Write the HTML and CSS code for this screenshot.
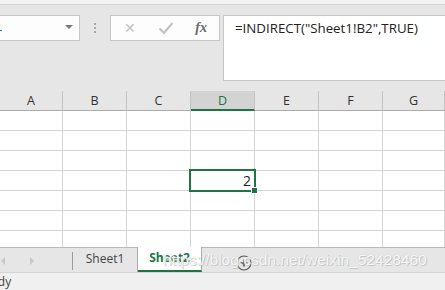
FILE: index.html
```html
<!DOCTYPE html>
<html lang="en">

<head>
    <meta charset="UTF-8">
    <title>INDIRECT - Sheet2</title>
    <link rel="stylesheet" href="styles.css">
</head>

<body>
    <div class="topstrip"></div>

    <div class="formula-row">
        <div class="namebox">
            <span class="caret-mark"></span>
            <span class="drop"></span>
        </div>
        <div class="grip"><i></i><i></i><i></i></div>
        <div class="fxbox">
            <span class="ico cancel">&#x2715;</span>
            <span class="ico enter">
                <svg width="16" height="14" viewBox="0 0 16 14"><path d="M1.5 7.5 L6 12 L14.5 2" fill="none" stroke="#c2c2c2" stroke-width="2.2"/></svg>
            </span>
            <span class="ico fx">fx</span>
        </div>
        <div class="formula">=INDIRECT("Sheet1!B2",TRUE)</div>
    </div>

    <div class="sheet">
        <div class="grid">
            <div class="hd">A</div>
            <div class="hd">B</div>
            <div class="hd">C</div>
            <div class="hd active">D</div>
            <div class="hd">E</div>
            <div class="hd">F</div>
            <div class="hd">G</div>
        </div>
        <div class="grid rows" id="rows"></div>
    </div>

    <div class="tabbar">
        <div class="nav">
            <span class="arrow left"></span>
            <span class="arrow right"></span>
        </div>
        <div class="tab">Sheet1</div>
        <div class="tab current">Sheet2</div>
        <div class="add">
            <svg width="16" height="16" viewBox="0 0 16 16"><circle cx="8" cy="8" r="7" fill="none" stroke="#555" stroke-width="1.2"/><path d="M8 4.5 V11.5 M4.5 8 H11.5" stroke="#555" stroke-width="1.6"/></svg>
        </div>
    </div>

    <div class="status"><span class="ready">Ready</span></div>

    <div class="watermark">https://blog.csdn.net/weixin_52428460</div>

    <script>
        // 7 rows x 7 columns, D4 holds the result
        const rows = document.getElementById('rows');
        for (let r = 1; r <= 7; r++) {
            for (let c = 0; c < 7; c++) {
                const cell = document.createElement('div');
                cell.className = 'cell';
                if (r === 4 && c === 3) {
                    cell.classList.add('selected');
                    cell.innerHTML = '2<span class="handle"></span>';
                }
                rows.appendChild(cell);
            }
        }
    </script>
</body>

</html>
```

FILE: styles.css
```css
body {
    margin: 0;
    width: 445px;
    height: 290px;
    overflow: hidden;
    position: relative;
    background-color: #e6e6e6;
    font-family: "Open Sans", "Noto Sans", sans-serif;
    color: #222;
}

.topstrip {
    height: 4px;
    background-color: #f3f3f3;
    border-bottom: 1px solid #d4d4d4;
}

.formula-row {
    display: flex;
    align-items: flex-start;
    margin-top: 10px;
    height: 66px;
}

.namebox {
    box-sizing: border-box;
    width: 80px;
    height: 26px;
    background: #fdfdfd;
    border: 1px solid #c6c6c6;
    border-left: none;
    position: relative;
}

.caret-mark {
    position: absolute;
    left: 0;
    top: 14px;
    width: 2px;
    height: 1px;
    background: #2a6fd6;
}

.drop {
    position: absolute;
    right: 6px;
    top: 9px;
    border-left: 4px solid transparent;
    border-right: 4px solid transparent;
    border-top: 4px solid #7a7a7a;
}

.grip {
    width: 30px;
    height: 26px;
    display: flex;
    flex-direction: column;
    align-items: center;
    justify-content: center;
    gap: 2px;
}

.grip i {
    width: 2px;
    height: 2px;
    background: #a8a8a8;
}

.fxbox {
    box-sizing: border-box;
    width: 110px;
    height: 26px;
    background: #fdfdfd;
    border: 1px solid #c6c6c6;
    display: flex;
    align-items: center;
}

.ico {
    width: 36px;
    text-align: center;
    display: flex;
    justify-content: center;
}

.cancel {
    color: #c2c2c2;
    font-size: 14px;
    font-family: "DejaVu Sans", sans-serif;
    margin-left: 1px;
}

.fx {
    font-family: "Liberation Serif", serif;
    font-style: italic;
    font-weight: bold;
    font-size: 14px;
    color: #6a6a6a;
}

.formula {
    box-sizing: border-box;
    flex: 1;
    height: 66px;
    margin-left: 3px;
    background: #fff;
    border: 1px solid #c6c6c6;
    border-right: none;
    padding: 3px 0 0 11px;
    font-size: 13.3px;
    color: #222;
}

.sheet {
    margin-top: 10px;
    height: 156px;
    overflow: hidden;
}

.grid {
    display: grid;
    grid-template-columns: 63px 64px 64px 64px 64px 64px 62px;
}

.hd {
    box-sizing: border-box;
    height: 20px;
    border-right: 1px solid #c4c4c4;
    border-bottom: 1px solid #ababab;
    text-align: center;
    font-size: 12.5px;
    line-height: 19px;
    color: #333;
}

.hd.active {
    background: #d3d3d3;
    color: #217346;
    border-bottom: 2px solid #217346;
}

.cell {
    box-sizing: border-box;
    height: 20px;
    background: #fff;
    border-right: 1px solid #d4d4d4;
    border-bottom: 1px solid #d4d4d4;
    text-align: right;
    font-size: 14px;
    line-height: 19px;
    padding-right: 3px;
}

.cell.selected {
    position: relative;
}

.cell.selected::after {
    content: "";
    position: absolute;
    left: -2px;
    top: -2px;
    width: 67px;
    height: 23px;
    box-sizing: border-box;
    border: 2px solid #217346;
}

.handle {
    position: absolute;
    right: -4px;
    bottom: -4px;
    width: 5px;
    height: 5px;
    background: #217346;
    border: 1px solid #fff;
    z-index: 1;
}

.tabbar {
    display: flex;
    height: 24px;
    border-top: 1px solid #b9b9b9;
}

.nav {
    width: 73px;
    display: flex;
    align-items: center;
    border-right: 1px solid #9a9a9a;
    margin: 4px 0 2px;
    box-sizing: border-box;
}

.arrow {
    width: 0;
    height: 0;
    border-top: 4px solid transparent;
    border-bottom: 4px solid transparent;
}

.arrow.left {
    margin-left: 1px;
    border-right: 4px solid #c8c8c8;
}

.arrow.right {
    margin-left: 25px;
    border-left: 4px solid #c8c8c8;
}

.tab {
    box-sizing: border-box;
    width: 65px;
    margin-top: -1px;
    border-right: 1px solid #ababab;
    text-align: center;
    font-size: 12px;
    line-height: 24px;
    color: #444;
}

.tab.current {
    width: 64px;
    background: #fff;
    color: #217346;
    font-weight: bold;
    border-bottom: 2px solid #217346;
    line-height: 22px;
}

.add {
    margin-left: 34px;
    padding-top: 6px;
}

.status {
    height: 18px;
    background: #f0f0f0;
    border-top: 1px solid #d6d6d6;
    font-size: 12px;
    color: #444;
    overflow: hidden;
}

.ready {
    display: inline-block;
    margin-left: -23px;
    line-height: 15px;
}

.watermark {
    position: absolute;
    left: 163px;
    top: 251px;
    font-family: "Liberation Sans", sans-serif;
    font-size: 15.5px;
    color: rgba(255, 255, 255, 0.85);
    text-shadow: 0 0 1px #c4c4c4, 1px 1px 0 rgba(180, 180, 180, 0.6);
}
```
